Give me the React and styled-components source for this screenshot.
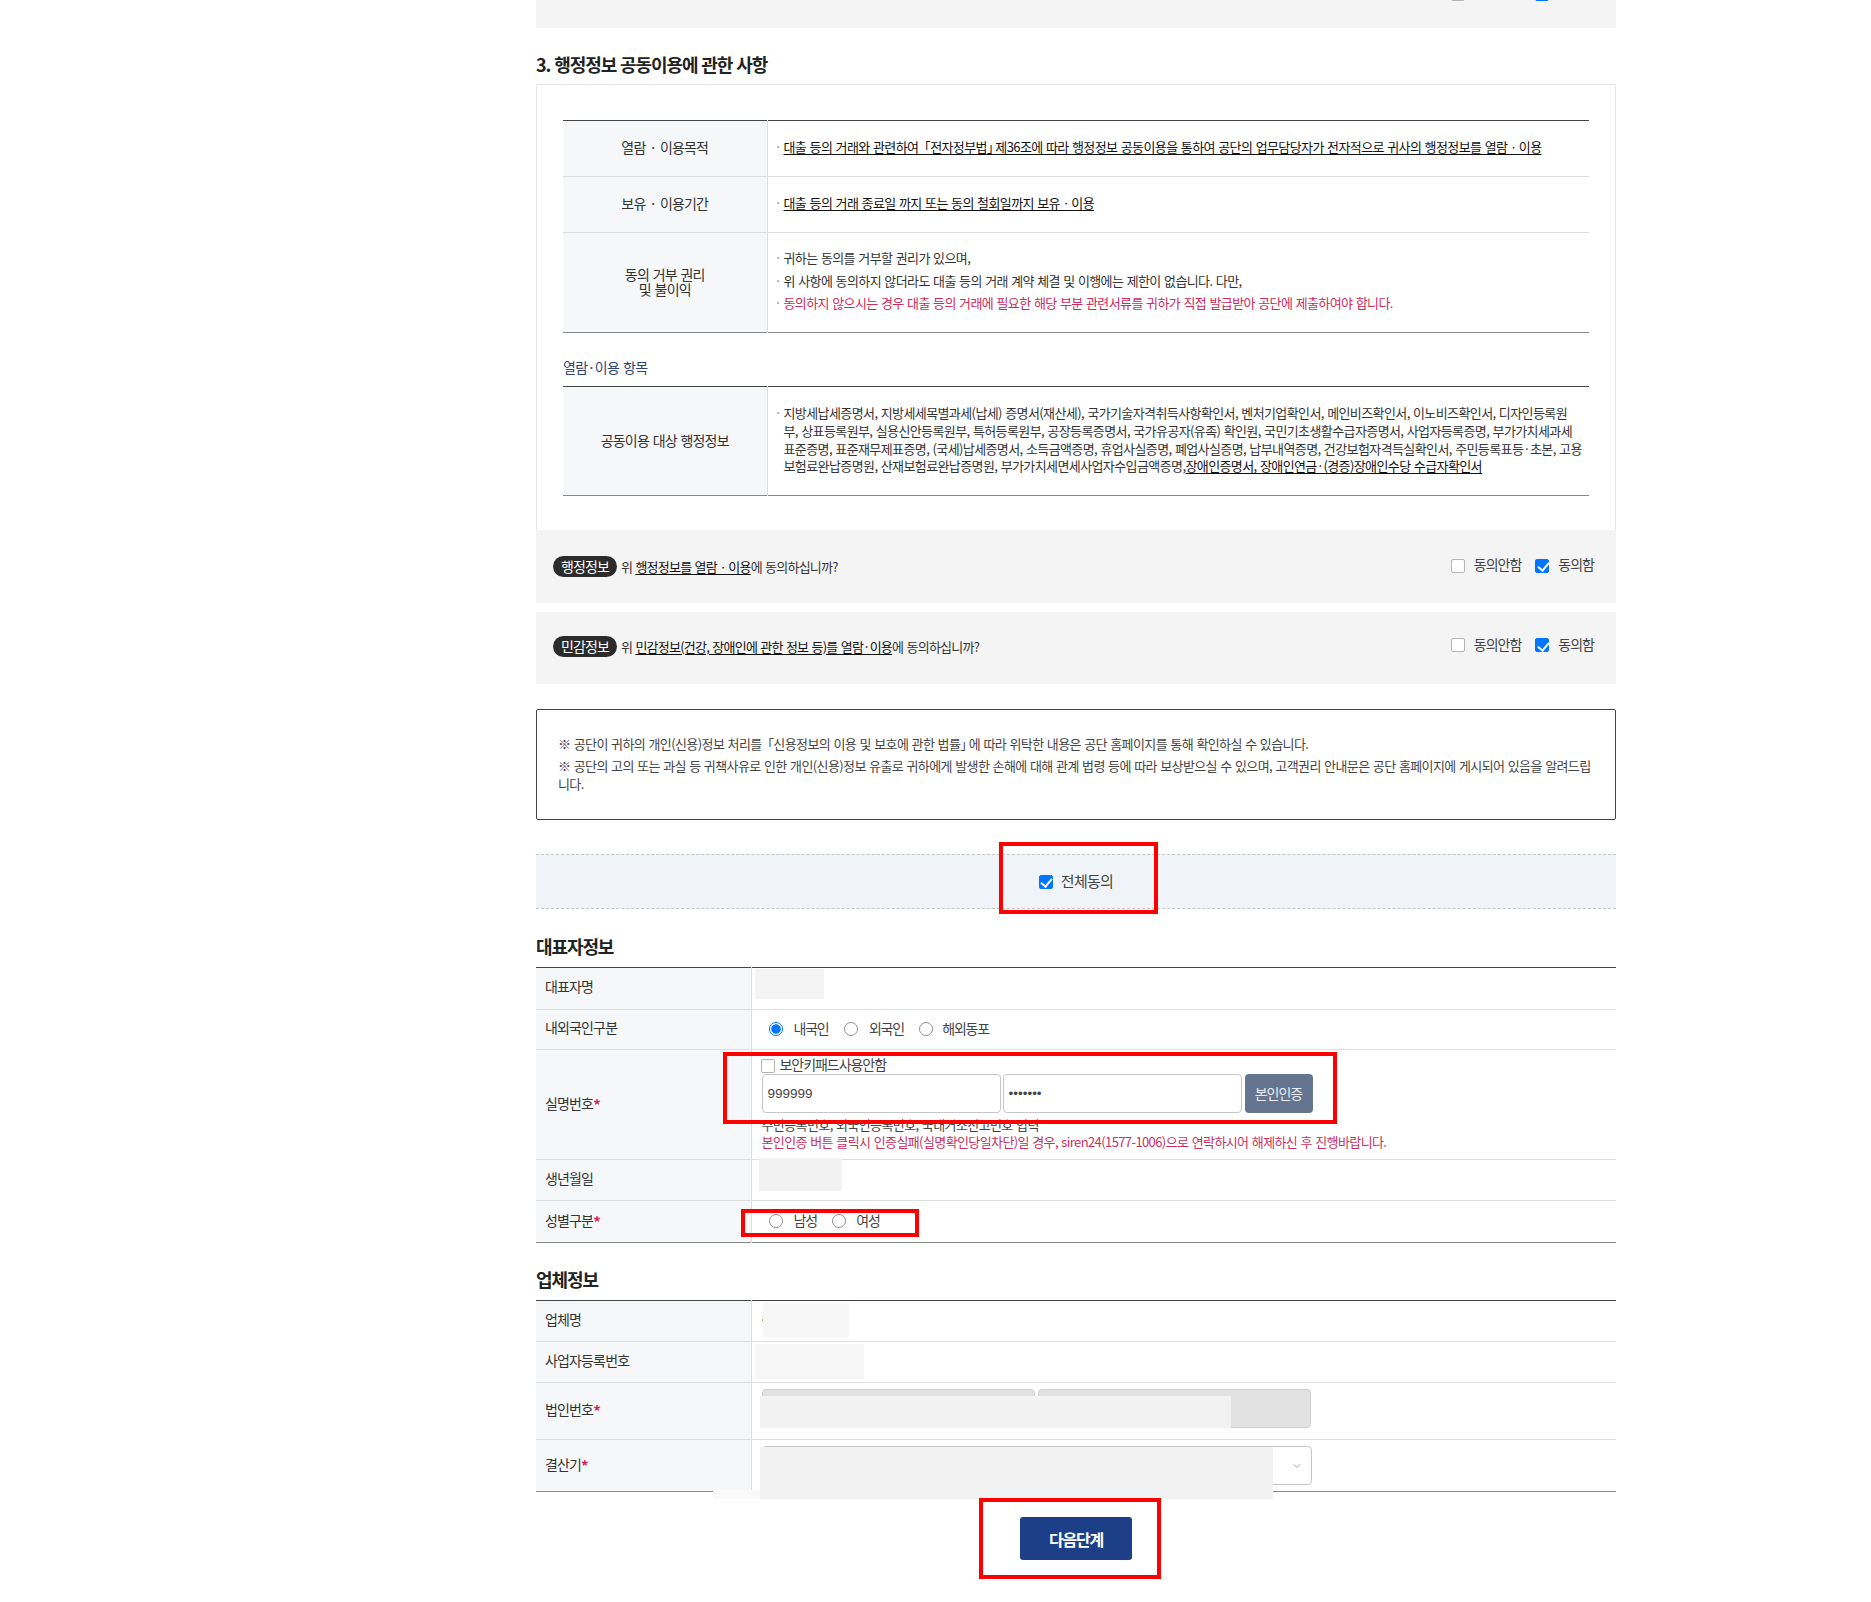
import * as React from "react";
import styled, { createGlobalStyle } from "styled-components";
import { ChevronDown } from "lucide-react";

const GlobalStyle = createGlobalStyle`
  body {
    margin: 0;
    background: #fff;
    color: #333;
    font-family: "Noto Sans CJK KR", "Noto Sans", "Liberation Sans", sans-serif;
    font-size: 13px;
    letter-spacing: -0.6px;
    word-spacing: 1px;
  }
  * { box-sizing: border-box; }
`;

// *** page
const Page = styled.div`
  position: relative;
  width: 1871px;
  height: 1602px;
  overflow: hidden;
`;
const Container = styled.div`
  width: 1080px;
  margin: -39px 0 0 536px;
`;

// *** overlays (annotations and blanked-out values lie over the form)
const RedMark = styled.div`
  position: absolute;
  left: ${(p) => p.$x}px;
  top: ${(p) => p.$y}px;
  width: ${(p) => p.$w}px;
  height: ${(p) => p.$h}px;
  border: 4px solid #f00;
`;
const Patch = styled.div`
  position: absolute;
  left: ${(p) => p.$x}px;
  top: ${(p) => p.$y}px;
  width: ${(p) => p.$w}px;
  height: ${(p) => p.$h}px;
  background: ${(p) => p.$c || "#f4f4f4"};
`;

// *** headings
const SectionTitle = styled.h3`
  margin: 0;
  height: ${(p) => p.$h}px;
  padding-top: ${(p) => p.$top}px;
  font-size: 18px;
  line-height: 24px;
  font-weight: 700;
  color: #222;
  letter-spacing: -1.1px;
  word-spacing: 1px;
`;
const SubTitle = styled.div`
  height: 53px;
  padding-top: 24px;
  font-size: 14px;
  line-height: 20px;
  color: #2d4373;
`;

// *** agreement box
const AgreeBox = styled.div`
  padding: 35px 26px 34px;
  border: 1px solid #e8e8e8;
  border-bottom: 0;
`;
const Table = styled.table`
  width: 100%;
  table-layout: fixed;
  border-collapse: collapse;
  border-top: 1px solid #444;
  border-bottom: 1px solid #888;
`;
const Row = styled.tr`
  height: ${(p) => p.$h}px;
  & + & {
    border-top: 1px solid #ddd;
  }
`;
const Head = styled.th`
  width: ${(p) => p.$w}px;
  padding: ${(p) => (p.$left ? "0 0 4px 9px" : "0 0 2px")};
  background: #f5f7f9;
  border-right: 1px solid #ddd;
  font-size: 14px;
  font-weight: 400;
  line-height: 15px;
  color: #333;
  letter-spacing: -0.85px;
  word-spacing: 1.5px;
  text-align: ${(p) => (p.$left ? "left" : "center")};
`;
const Cell = styled.td`
  padding: ${(p) => p.$pad || "0 10px 3px"};
  vertical-align: ${(p) => (p.$top ? "top" : "middle")};
  line-height: ${(p) => p.$lh || 22}px;
`;
const Bullet = styled.div`
  position: relative;
  padding-left: 6px;
  color: ${(p) => (p.$red ? "#cf2a5a" : "#333")};
  white-space: nowrap;
  &::before {
    content: "·";
    position: absolute;
    left: -3px;
    color: #888;
  }
`;
const Link = styled.span`
  text-decoration: underline;
  text-underline-offset: 2px;
  color: #111;
`;
const OpenMark = styled.span`
  margin-left: -4px;
`;
const CloseMark = styled.span`
  margin-right: -4px;
`;

// *** consent rows
const ConsentRow = styled.div`
  display: flex;
  align-items: center;
  justify-content: space-between;
  height: ${(p) => p.$h}px;
  margin-bottom: ${(p) => p.$mb || 0}px;
  padding: 0 22px ${(p) => p.$pb || 0}px 17px;
  background: #f4f4f4;
`;
const Question = styled.div`
  display: flex;
  align-items: center;
  gap: 4px;
  margin-bottom: ${(p) => (p.$lift ? 12 : 0)}px;
  letter-spacing: -0.75px;
  white-space: pre;
`;
const Pill = styled.span`
  display: inline-block;
  width: 64px;
  height: 21px;
  border-radius: 11px;
  background: #2b2b2b;
  color: #fff;
  font-size: 14px;
  line-height: 20px;
  letter-spacing: -0.9px;
  text-align: center;
`;
const Choices = styled.div`
  display: flex;
  align-items: center;
  gap: 14px;
  margin-top: -5px;
`;
const Choice = styled.label`
  display: flex;
  align-items: center;
  gap: ${(p) => p.$gap || 9}px;
  font-size: 14px;
  letter-spacing: -1px;
  color: #444;
`;
const Check = styled.input.attrs({ type: "checkbox", readOnly: true })`
  appearance: none;
  position: relative;
  flex: none;
  width: 14px;
  height: 14px;
  margin: 3px 0 0;
  border: 1px solid #b4b4b4;
  border-radius: 2px;
  background: #fff;
  &:checked {
    border-color: #0075ff;
    background: #0075ff;
  }
  &:checked::after {
    content: "";
    position: absolute;
    left: 3.5px;
    top: 0.5px;
    width: 5px;
    height: 9px;
    border: solid #fff;
    border-width: 0 2px 2px 0;
    transform: rotate(40deg);
  }
`;
const Radio = styled.input.attrs({ type: "radio", readOnly: true })`
  appearance: none;
  flex: none;
  width: 14px;
  height: 14px;
  margin: 2px 0 0;
  border: 1px solid #8f8f8f;
  border-radius: 50%;
  background: #fff;
  &:checked {
    border-color: #0075ff;
    background: radial-gradient(circle, #0075ff 0 4.4px, #fff 5px);
  }
`;

// *** notice and agree-all
const Notice = styled.div`
  height: 111px;
  margin-top: 25px;
  padding: 25px 21px 0;
  border: 1px solid #444;
  border-radius: 2px;
  line-height: 18px;
  color: #444;
  word-break: break-all;
  p {
    margin: 0 0 4px;
  }
`;
const AgreeAll = styled.div`
  display: flex;
  align-items: center;
  justify-content: center;
  height: 55px;
  margin-top: 34px;
  padding-bottom: 3px;
  border-top: 1px dashed #c2c6ca;
  border-bottom: 1px dashed #c2c6ca;
  background: #f0f4f8;
`;
const AgreeAllLabel = styled(Choice)`
  font-size: 15px;
  letter-spacing: -0.7px;
`;

// *** form parts
const RadioGroup = styled.div`
  display: flex;
  align-items: center;
  gap: 15.5px;
  padding-left: 7px;
  label {
    letter-spacing: -1.25px;
  }
`;
const Keypad = styled.label`
  display: flex;
  align-items: center;
  gap: 5px;
  height: 19px;
  margin-left: -1px;
  font-size: 14px;
  letter-spacing: -1.05px;
  color: #444;
  line-height: 17px;
`;
const InputRow = styled.div`
  display: flex;
  gap: ${(p) => p.$gap || 2}px;
`;
const TextInput = styled.input`
  width: ${(p) => p.$w || 239}px;
  height: 39px;
  padding: 0 5px;
  border: 1px solid ${(p) => (p.disabled ? "#cfcfcf" : "#c6c6c6")};
  border-radius: 4px;
  background: ${(p) => (p.disabled ? "#e2e2e2" : "#fff")};
  color: #444;
  font-family: "Liberation Sans", sans-serif;
  font-size: 13.5px;
`;
const VerifyButton = styled.button`
  width: 68px;
  height: 39px;
  margin-left: 1px;
  border: 0;
  border-radius: 4px;
  background: #66758f;
  color: #e8edf3;
  font: inherit;
  font-size: 14px;
  letter-spacing: -1px;
`;
const Hint = styled.div`
  margin-top: ${(p) => p.$mt || 0}px;
  line-height: 17px;
  color: ${(p) => (p.$red ? "#c9305f" : "#444")};
  white-space: nowrap;
`;
const Required = styled.span`
  position: relative;
  top: 2px;
  font-size: 15px;
  font-weight: 700;
  color: #d4255c;
`;
const SelectBox = styled.div`
  display: flex;
  align-items: center;
  justify-content: flex-end;
  width: 550px;
  height: 39px;
  padding-right: 8px;
  border: 1px solid #c6c6c6;
  border-radius: 4px;
  color: #888;
`;
const NextWrap = styled.div`
  display: flex;
  justify-content: center;
  margin-top: 25px;
`;
const NextButton = styled.button`
  width: 112px;
  height: 43px;
  border: 0;
  border-radius: 3px;
  background: #1c3f87;
  color: #fff;
  font: inherit;
  font-size: 16px;
  font-weight: 700;
  letter-spacing: -1.2px;
`;

const Consent = ({ tag, h, mb, pb, lift, children }) => (
  <ConsentRow $h={h} $mb={mb} $pb={pb}>
    <Question $lift={lift}>
      <Pill>{tag}</Pill>
      <span>{children}</span>
    </Question>
    <Choices>
      <Choice>
        <Check />
        동의안함
      </Choice>
      <Choice>
        <Check defaultChecked />
        동의함
      </Choice>
    </Choices>
  </ConsentRow>
);

const App = () => (
  <Page>
    <GlobalStyle />
    <Container>
      <Consent tag="고유식별" h={67} lift>
        위 <Link>고유식별정보를 수집ㆍ이용</Link>에 동의하십니까?
      </Consent>

      <SectionTitle $h={56} $top={24}>
        3. 행정정보 공동이용에 관한 사항
      </SectionTitle>
      <AgreeBox>
        <Table>
          <tbody>
            <Row $h={56}>
              <Head $w={204}>열람 · 이용목적</Head>
              <Cell>
                <Bullet>
                  <Link>
                    대출 등의 거래와 관련하여 <OpenMark>「</OpenMark>전자정부법<CloseMark>」</CloseMark>제36조에 따라
                    행정정보 공동이용을 통하여 공단의 업무담당자가 전자적으로 귀사의 행정정보를 열람ㆍ이용
                  </Link>
                </Bullet>
              </Cell>
            </Row>
            <Row $h={56}>
              <Head $w={204}>보유 · 이용기간</Head>
              <Cell>
                <Bullet>
                  <Link>대출 등의 거래 종료일 까지 또는 동의 철회일까지 보유ㆍ이용</Link>
                </Bullet>
              </Cell>
            </Row>
            <Row $h={100}>
              <Head $w={204}>
                동의 거부 권리
                <br />및 불이익
              </Head>
              <Cell $lh={22.5}>
                <Bullet>귀하는 동의를 거부할 권리가 있으며,</Bullet>
                <Bullet>위 사항에 동의하지 않더라도 대출 등의 거래 계약 체결 및 이행에는 제한이 없습니다. 다만,</Bullet>
                <Bullet $red>
                  동의하지 않으시는 경우 대출 등의 거래에 필요한 해당 부분 관련서류를 귀하가 직접 발급받아 공단에 제출하여야 합니다.
                </Bullet>
              </Cell>
            </Row>
          </tbody>
        </Table>
        <SubTitle>열람·이용 항목</SubTitle>
        <Table>
          <tbody>
            <Row $h={109}>
              <Head $w={204}>공동이용 대상 행정정보</Head>
              <Cell $lh={17.7}>
                <Bullet>
                  지방세납세증명서, 지방세세목별과세(납세) 증명서(재산세), 국가기술자격취득사항확인서, 벤처기업확인서, 메인비즈확인서, 이노비즈확인서, 디자인등록원
                  <br />
                  부, 상표등록원부, 실용신안등록원부, 특허등록원부, 공장등록증명서, 국가유공자(유족) 확인원, 국민기초생활수급자증명서, 사업자등록증명, 부가가치세과세
                  <br />
                  표준증명, 표준재무제표증명, (국세)납세증명서, 소득금액증명, 휴업사실증명, 폐업사실증명, 납부내역증명, 건강보험자격득실확인서, 주민등록표등·초본, 고용
                  <br />
                  보험료완납증명원, 산재보험료완납증명원, 부가가치세면세사업자수입금액증명,
                  <Link>장애인증명서, 장애인연금·(경증)장애인수당 수급자확인서</Link>
                </Bullet>
              </Cell>
            </Row>
          </tbody>
        </Table>
      </AgreeBox>

      <Consent tag="행정정보" h={73} mb={9}>
        위 <Link>행정정보를 열람ㆍ이용</Link>에 동의하십니까?
      </Consent>
      <Consent tag="민감정보" h={72} pb={4}>
        위 <Link>민감정보(건강, 장애인에 관한 정보 등)를 열람·이용</Link>에 동의하십니까?
      </Consent>

      <Notice>
        <p>※ 공단이 귀하의 개인(신용)정보 처리를 <OpenMark>「</OpenMark>신용정보의 이용 및 보호에 관한 법률<CloseMark>」</CloseMark>에 따라 위탁한 내용은 공단 홈페이지를 통해 확인하실 수 있습니다.</p>
        <p>※ 공단의 고의 또는 과실 등 귀책사유로 인한 개인(신용)정보 유출로 귀하에게 발생한 손해에 대해 관계 법령 등에 따라 보상받으실 수 있으며, 고객권리 안내문은 공단 홈페이지에 게시되어 있음을 알려드립니다.</p>
      </Notice>

      <AgreeAll>
        <AgreeAllLabel $gap={8}>
          <Check defaultChecked />
          전체동의
        </AgreeAllLabel>
      </AgreeAll>

      <SectionTitle $h={58} $top={25}>
        대표자정보
      </SectionTitle>
      <Table>
        <tbody>
          <Row $h={42}>
            <Head $w={215} $left>대표자명</Head>
            <Cell />
          </Row>
          <Row $h={40}>
            <Head $w={215} $left>내외국인구분</Head>
            <Cell>
              <RadioGroup>
                <Choice $gap={11}>
                  <Radio name="nation" defaultChecked />
                  내국인
                </Choice>
                <Choice $gap={11}>
                  <Radio name="nation" />
                  외국인
                </Choice>
                <Choice $gap={9}>
                  <Radio name="nation" />
                  해외동포
                </Choice>
              </RadioGroup>
            </Cell>
          </Row>
          <Row $h={110}>
            <Head $w={215} $left>
              실명번호<Required>*</Required>
            </Head>
            <Cell $top $pad="5px 10px 0" $lh={17}>
              <Keypad>
                <Check />
                보안키패드사용안함
              </Keypad>
              <InputRow>
                <TextInput defaultValue="999999" />
                <TextInput type="password" defaultValue="1234567" />
                <VerifyButton>본인인증</VerifyButton>
              </InputRow>
              <Hint $mt={3}>주민등록번호, 외국인등록번호, 국내거소신고번호 입력</Hint>
              <Hint $red>
                본인인증 버튼 클릭시 인증실패(실명확인당일차단)일 경우, siren24(1577-1006)으로 연락하시어 해제하신 후 진행바랍니다.
              </Hint>
            </Cell>
          </Row>
          <Row $h={41}>
            <Head $w={215} $left>생년월일</Head>
            <Cell />
          </Row>
          <Row $h={42}>
            <Head $w={215} $left>
              성별구분<Required>*</Required>
            </Head>
            <Cell>
              <RadioGroup>
                <Choice $gap={11}>
                  <Radio name="gender" />
                  남성
                </Choice>
                <Choice $gap={10}>
                  <Radio name="gender" />
                  여성
                </Choice>
              </RadioGroup>
            </Cell>
          </Row>
        </tbody>
      </Table>

      <SectionTitle $h={57} $top={24}>
        업체정보
      </SectionTitle>
      <Table>
        <tbody>
          <Row $h={41}>
            <Head $w={215} $left>업체명</Head>
            <Cell $pad="0 10px 3px 8px">·</Cell>
          </Row>
          <Row $h={41}>
            <Head $w={215} $left>사업자등록번호</Head>
            <Cell />
          </Row>
          <Row $h={57}>
            <Head $w={215} $left>
              법인번호<Required>*</Required>
            </Head>
            <Cell $top $pad="6px 10px 0">
              <InputRow $gap={3}>
                <TextInput $w={273} disabled />
                <TextInput $w={273} disabled />
              </InputRow>
            </Cell>
          </Row>
          <Row $h={52}>
            <Head $w={215} $left>
              결산기<Required>*</Required>
            </Head>
            <Cell $top $pad="6px 10px 0">
              <SelectBox>
                <ChevronDown size={12} strokeWidth={1.5} />
              </SelectBox>
            </Cell>
          </Row>
        </tbody>
      </Table>

      <NextWrap>
        <NextButton>다음단계</NextButton>
      </NextWrap>
    </Container>

    <Patch $x={755} $y={969} $w={69} $h={30} />
    <Patch $x={759} $y={1158} $w={83} $h={33} $c="#f2f2f2" />
    <Patch $x={763} $y={1303} $w={86} $h={34} $c="#f6f6f6" />
    <Patch $x={755} $y={1344} $w={109} $h={35} $c="#f6f6f6" />
    <Patch $x={760} $y={1396} $w={471} $h={32} $c="#f2f2f2" />
    <Patch $x={713} $y={1490} $w={47} $h={9} $c="#fafafa" />
    <Patch $x={760} $y={1447} $w={513} $h={52} $c="#f2f2f2" />

    <RedMark $x={999} $y={842} $w={159} $h={72} />
    <RedMark $x={723} $y={1052} $w={614} $h={72} />
    <RedMark $x={741} $y={1209} $w={178} $h={28} />
    <RedMark $x={979} $y={1498} $w={182} $h={81} />
  </Page>
);

export default App;
